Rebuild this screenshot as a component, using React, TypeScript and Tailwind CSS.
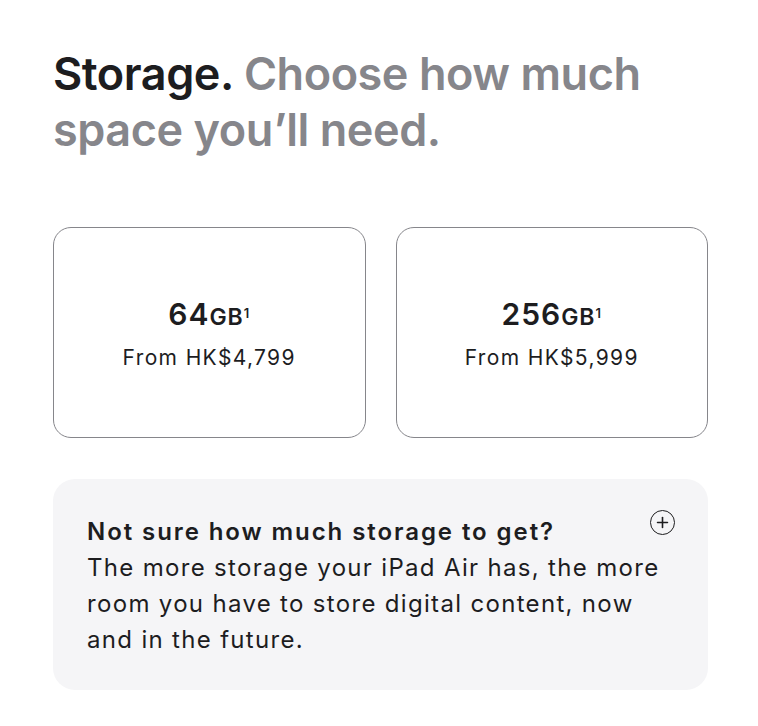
import { Plus } from "lucide-react";

const options = [
  { size: "64", price: "From HK$4,799" },
  { size: "256", price: "From HK$5,999" },
];

export default function App() {
  return (
    <div
      className="min-h-screen bg-white pl-[53px] pr-[50px] pt-[46px] text-[#1d1d1f]"
      style={{ fontFamily: "Inter, 'Liberation Sans', sans-serif" }}
    >
      <h2 className="text-[45px] font-semibold leading-[56px] tracking-[-0.01em]">
        Storage. <span className="text-[#86868b]">Choose how much space you’ll need.</span>
      </h2>

      <div className="mt-[69px] grid grid-cols-2 gap-[30px]">
        {options.map((o) => (
          <button
            key={o.size}
            className="flex h-[211px] flex-col items-center justify-center rounded-[18px] border-[1.5px] border-[#86868b] bg-white"
          >
            <span className="flex items-baseline font-semibold tracking-[0.06em]">
              <span className="text-[30px]">{o.size}</span>
              <span className="text-[23px]">GB</span>
              <sup className="text-[13px]">1</sup>
            </span>
            <span className="mt-[5px] text-[21px] tracking-[0.065em]">{o.price}</span>
          </button>
        ))}
      </div>

      <div className="relative mt-[41px] rounded-[22px] bg-[#f5f5f7] px-[34px] pb-[32px] pt-[35px]">
        <div className="absolute right-[33px] top-[31px] flex h-[25px] w-[25px] items-center justify-center rounded-full border-[1.75px] border-[#1d1d1f]">
          <Plus size={17} strokeWidth={2.25} />
        </div>
        <p className="text-[24px] font-semibold leading-[36px] tracking-[0.08em]">
          Not sure how much storage to get?
        </p>
        <p className="text-[24px] leading-[36px] tracking-[0.055em]">
          The more storage your iPad Air has, the more room you have to store digital content, now and in the future.
        </p>
      </div>
    </div>
  );
}
